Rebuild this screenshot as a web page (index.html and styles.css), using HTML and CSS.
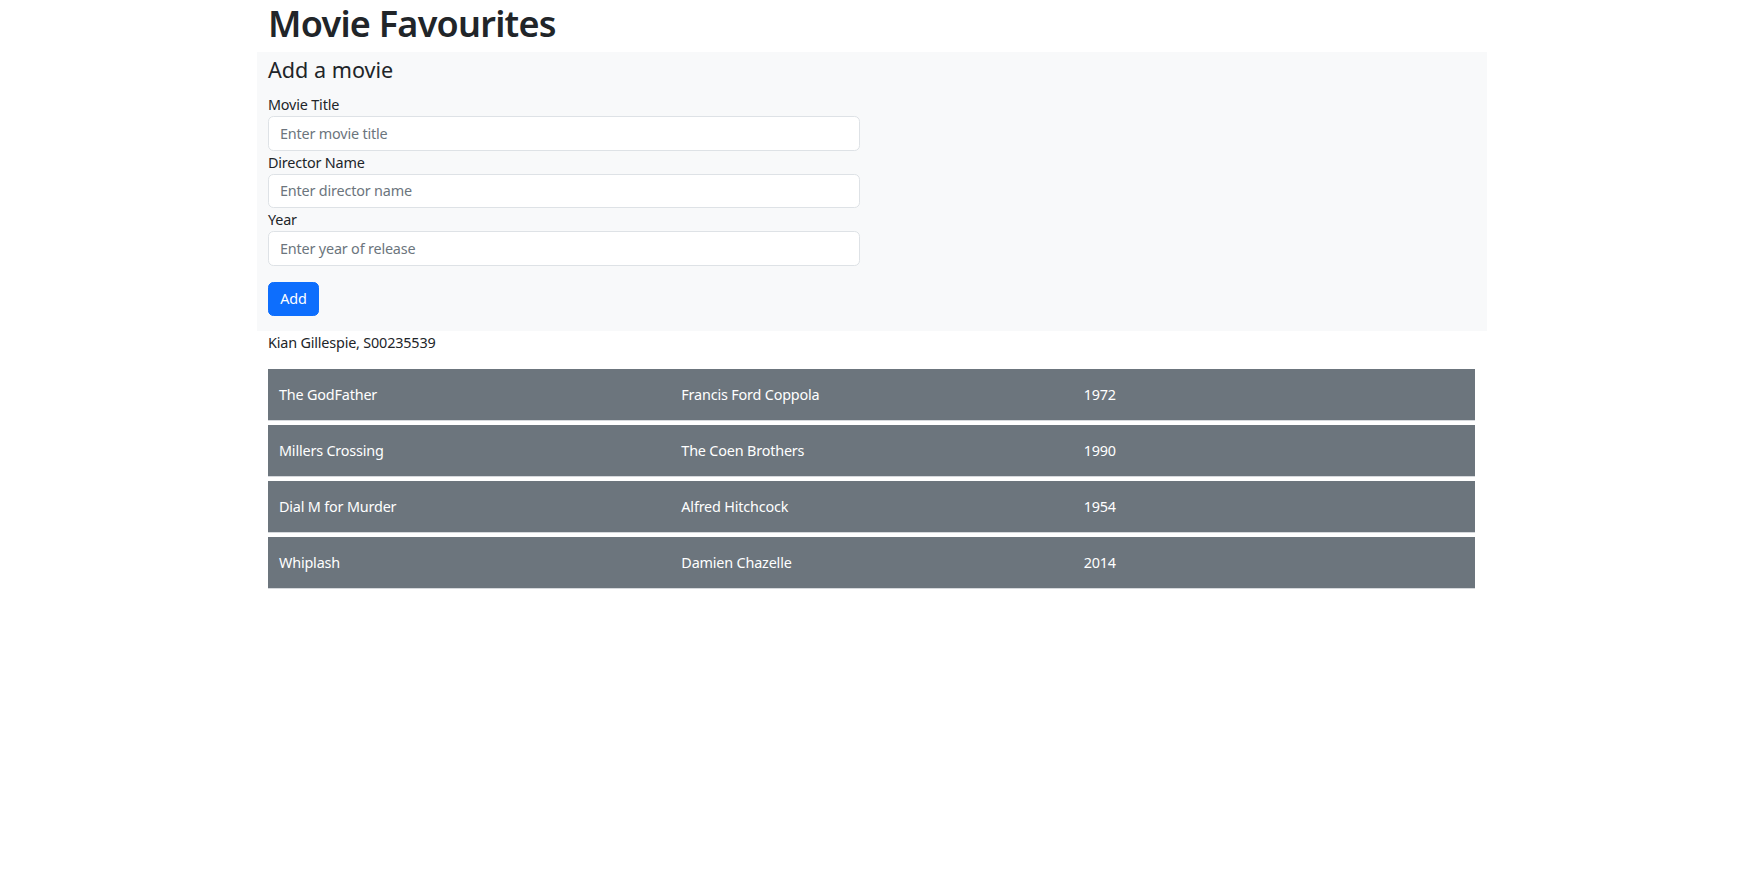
FILE: index.html
```html
<!DOCTYPE html>
<html lang="en">
<head>
<meta charset="utf-8">
<title>Movie Favourites</title>
<link rel="stylesheet" href="styles.css">
</head>
<body>
<div class="container">
  <h1 class="title">Movie Favourites</h1>
  <div class="panel">
    <h4 class="panel-title">Add a movie</h4>
    <form class="form">
      <label class="label" for="t">Movie Title</label>
      <input class="input" id="t" type="text" placeholder="Enter movie title">
      <label class="label" for="d">Director Name</label>
      <input class="input" id="d" type="text" placeholder="Enter director name">
      <label class="label" for="y">Year</label>
      <input class="input" id="y" type="text" placeholder="Enter year of release">
      <button class="btn" type="button">Add</button>
    </form>
  </div>
  <p class="author">Kian Gillespie, S00235539</p>
  <div class="movies">
    <div class="movie"><span>The GodFather</span><span>Francis Ford Coppola</span><span>1972</span></div>
    <div class="movie"><span>Millers Crossing</span><span>The Coen Brothers</span><span>1990</span></div>
    <div class="movie"><span>Dial M for Murder</span><span>Alfred Hitchcock</span><span>1954</span></div>
    <div class="movie"><span>Whiplash</span><span>Damien Chazelle</span><span>2014</span></div>
  </div>
</div>
</body>
</html>
```

FILE: styles.css
```css
* { box-sizing: border-box; }
body {
  margin: 0;
  font-family: "Noto Sans", "Open Sans", sans-serif;
  font-size: 14.4px;
  line-height: 21.6px;
  letter-spacing: -0.18px;
  color: #212529;
  background: #fff;
}
.container {
  width: 1230px;
  margin: 0 auto;
}
.title {
  margin: 0;
  padding: 2px 11px 0;
  height: 52px;
  font-size: 36px;
  line-height: 43px;
  font-weight: 600;
  letter-spacing: -0.75px;
  color: #212529;
}
.panel {
  background: #f8f9fa;
  padding: 0 11px 14.5px;
}
.panel-title {
  margin: 0;
  height: 41px;
  padding-top: 5px;
  font-size: 21.6px;
  line-height: 26px;
  font-weight: 400;
  letter-spacing: 0;
}
.form {
  display: flex;
  flex-direction: column;
  align-items: flex-start;
  width: 592px;
}
.label {
  display: block;
  height: 23px;
  line-height: 23px;
}
.input {
  width: 592px;
  height: 34.5px;
  padding: 0 11px;
  border: 1px solid #dee2e6;
  border-radius: 5.4px;
  background: #fff;
  font: inherit;
  letter-spacing: inherit;
  color: #212529;
}
.input::placeholder { color: #6c757d; }
.btn {
  margin-top: 16px;
  height: 34.5px;
  width: 51px;
  padding: 0;
  border: 1px solid #0d6efd;
  border-radius: 5.4px;
  background: #0d6efd;
  color: #fff;
  font: inherit;
  letter-spacing: inherit;
}
.author {
  margin: 0;
  padding: 1.5px 11px 0;
  height: 38px;
}
.movies {
  width: 1207px;
  margin-left: 11px;
  display: flex;
  flex-direction: column;
}
.movie {
  display: grid;
  grid-template-columns: 1fr 1fr 1fr;
  height: 52px;
  align-items: center;
  background: #6c757d;
  color: #fff;
  border-bottom: 1px solid #d5d8dc;
  margin-bottom: 4px;
}
.movie span { padding: 1px 11px 0; }
```
